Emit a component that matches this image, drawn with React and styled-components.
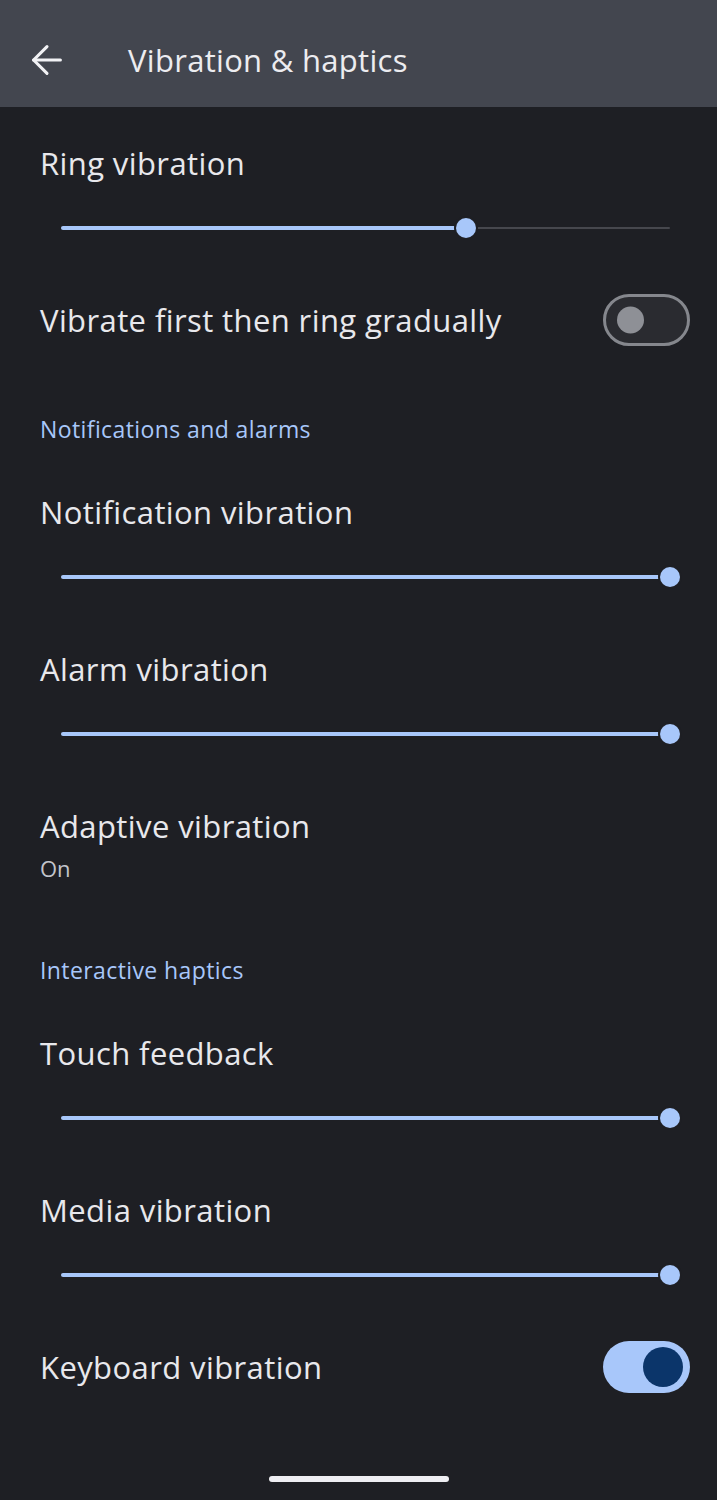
import React from "react";
import styled, { createGlobalStyle } from "styled-components";
import { ArrowLeft } from "lucide-react";

const GlobalStyle = createGlobalStyle`
  html, body {
    margin: 0;
    padding: 0;
    background: #1e1f24;
  }
  body {
    font-family: "Open Sans", Roboto, sans-serif;
    color: #e6e6eb;
  }
`;

const Page = styled.div`
  width: 717px;
  min-height: 1500px;
  background: #1e1f24;
  display: flex;
  flex-direction: column;
`;

const TopBar = styled.header`
  height: 107px;
  background: #43464f;
  display: flex;
  align-items: center;
  padding: 13px 0 0 24px;
  box-sizing: border-box;
`;

const BackButton = styled.div`
  width: 46px;
  height: 46px;
  display: flex;
  align-items: center;
  justify-content: center;
  color: #f2f2f5;
`;

const Title = styled.h1`
  margin: 0 0 0 58px;
  font-size: 31px;
  font-weight: 400;
  color: #ececf0;
  letter-spacing: 0.3px;
`;

const Content = styled.main`
  padding: 20px 27px 0 40px;
  display: flex;
  flex-direction: column;
`;

const Pref = styled.div`
  padding-top: 16px;
  padding-bottom: ${(p) => p.$bottom}px;
  box-sizing: border-box;
`;

const Row = styled.div`
  display: flex;
  align-items: center;
  justify-content: space-between;
  height: 40px;
`;

const Label = styled.div`
  font-size: 31px;
  line-height: 40px;
  color: #e8e8ec;
  letter-spacing: 0.4px;
`;

const Summary = styled.div`
  margin-top: 7px;
  font-size: 22px;
  line-height: 30px;
  color: #c3c5cc;
`;

const SectionTitle = styled.div`
  padding: 58px 0 32px;
  font-size: 23px;
  line-height: 30px;
  color: #a8c7fa;
  font-weight: 500;
  letter-spacing: 0.4px;
`;

const SliderWrap = styled.div`
  position: relative;
  margin: 25px 0 0 21px;
  width: 609px;
  height: 40px;
`;

const TrackRest = styled.div`
  position: absolute;
  left: 0;
  right: 0;
  top: 19px;
  height: 2px;
  background: #46474d;
  border-radius: 1px;
`;

const TrackActive = styled.div`
  position: absolute;
  left: 0;
  top: 18px;
  height: 4px;
  background: #a8c7fa;
  border-radius: 2px;
`;

const Thumb = styled.div`
  position: absolute;
  top: 10px;
  width: 20px;
  height: 20px;
  margin-left: -10px;
  border-radius: 50%;
  background: #a8c7fa;
  box-shadow: 0 0 0 2px #1e1f24;
`;

const SwitchTrack = styled.div`
  position: relative;
  width: 87px;
  height: 52px;
  border-radius: 26px;
  box-sizing: border-box;
  border: ${(p) => (p.$on ? "none" : "3px solid #85878d")};
  background: ${(p) => (p.$on ? "#a8c7fa" : "#2a2b30")};
  flex-shrink: 0;
`;

const SwitchKnob = styled.div`
  position: absolute;
  top: 50%;
  transform: translateY(-50%);
  border-radius: 50%;
  width: ${(p) => (p.$on ? 40 : 27)}px;
  height: ${(p) => (p.$on ? 40 : 27)}px;
  left: ${(p) => (p.$on ? 40 : 11)}px;
  background: ${(p) => (p.$on ? "#0b356a" : "#8e9096")};
`;

const HomeBar = styled.div`
  margin: 73px auto 0;
  width: 180px;
  height: 6px;
  border-radius: 3px;
  background: #eeeef2;
`;

const Slider = ({ value }) => (
  <SliderWrap>
    <TrackRest />
    <TrackActive style={{ width: `${value * 100}%` }} />
    <Thumb style={{ left: `${value * 100}%` }} />
  </SliderWrap>
);

const SliderPref = ({ label, value }) => (
  <Pref $bottom={36}>
    <Label>{label}</Label>
    <Slider value={value} />
  </Pref>
);

const SwitchPref = ({ label, on }) => (
  <Pref $bottom={16}>
    <Row>
      <Label>{label}</Label>
      <SwitchTrack $on={on}>
        <SwitchKnob $on={on} />
      </SwitchTrack>
    </Row>
  </Pref>
);

export default function App() {
  return (
    <Page>
      <GlobalStyle />
      <TopBar>
        <BackButton>
          <ArrowLeft size={46} strokeWidth={1.6} />
        </BackButton>
        <Title>Vibration &amp; haptics</Title>
      </TopBar>
      <Content>
        <SliderPref label="Ring vibration" value={0.665} />
        <SwitchPref label="Vibrate first then ring gradually" on={false} />
        <SectionTitle>Notifications and alarms</SectionTitle>
        <SliderPref label="Notification vibration" value={1} />
        <SliderPref label="Alarm vibration" value={1} />
        <Pref $bottom={14}>
          <Label>Adaptive vibration</Label>
          <Summary>On</Summary>
        </Pref>
        <SectionTitle>Interactive haptics</SectionTitle>
        <SliderPref label="Touch feedback" value={1} />
        <SliderPref label="Media vibration" value={1} />
        <SwitchPref label="Keyboard vibration" on={true} />
      </Content>
      <HomeBar />
    </Page>
  );
}
